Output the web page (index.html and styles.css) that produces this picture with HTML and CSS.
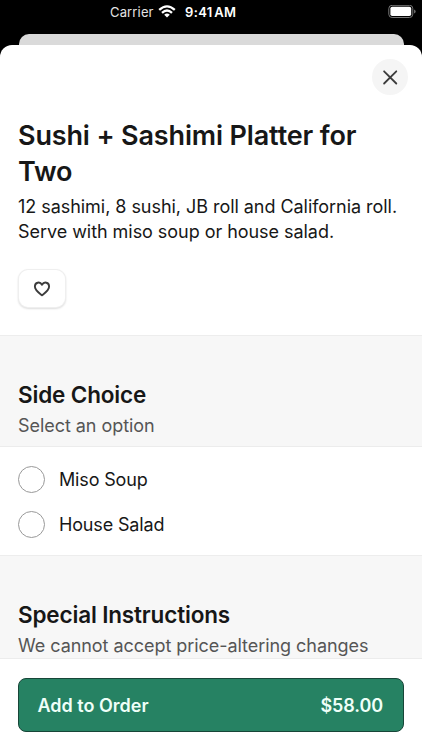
FILE: index.html
```html
<!DOCTYPE html>
<html lang="en">
<head>
<meta charset="utf-8">
<title>Sushi + Sashimi Platter for Two</title>
<link rel="stylesheet" href="styles.css">
</head>
<body>
<div class="screen">
  <header class="status">
    <span class="carrier">Carrier</span>
    <svg class="wifi" width="18" height="13" viewBox="0 0 18 13" fill="none" stroke="#fff" stroke-width="2.3">
      <path d="M1.2 4.9Q9-2.2 16.8 4.9M4 7.8Q9 3.1 14 7.8"/>
      <path d="M6.2 9.8Q9 7.4 11.8 9.8L9 12.6Z" fill="#fff" stroke="none"/>
    </svg>
    <span class="time">9:41 AM</span>
    <svg class="battery" width="28" height="14" viewBox="0 0 28 14">
      <rect x=".8" y=".3" width="24" height="12.2" rx="3.3" fill="none" stroke="#777" stroke-width="1"/>
      <rect x="2.4" y="1.8" width="20.8" height="9.2" rx="1.8" fill="#fff"/>
      <path d="M26.1 4.4q1.5.5 1.5 2t-1.5 2z" fill="#777"/>
    </svg>
  </header>
  <div class="back-card"></div>
  <main class="sheet">
    <section class="intro">
      <button class="close" aria-label="Close">
        <svg width="16" height="16" viewBox="0 0 16 16" fill="none" stroke="#3c3c3c" stroke-width="1.8" stroke-linecap="round"><path d="M2.1 2.3l12.2 12.2M14.3 2.3L2.1 14.5"/></svg>
      </button>
      <h1>Sushi + Sashimi Platter for Two</h1>
      <p class="description">12 sashimi, 8 sushi, JB roll and California roll. Serve with miso soup or house salad.</p>
      <button class="favorite" aria-label="Favorite">
        <svg width="18" height="16" viewBox="0 0 18 16" fill="none" stroke="#3c3c3c" stroke-width="1.9" stroke-linejoin="round"><path d="M9 14.3C7.7 13.1 1.9 9.7 1.9 5.5C1.9 1.3 6.9.2 9 3.7C11.1.2 16.1 1.3 16.1 5.5C16.1 9.7 10.3 13.1 9 14.3Z"/></svg>
      </button>
    </section>
    <section class="group">
      <h2>Side Choice</h2>
      <p>Select an option</p>
    </section>
    <section class="options">
      <label><span class="radio"></span>Miso Soup</label>
      <label><span class="radio"></span>House Salad</label>
    </section>
    <section class="group special">
      <h2>Special Instructions</h2>
      <p>We cannot accept price-altering changes</p>
    </section>
  </main>
  <footer>
    <button class="order"><span class="order-label">Add to Order</span><span class="price">$58.00</span></button>
  </footer>
</div>
</body>
</html>
```
FILE: styles.css
```css
* { box-sizing: border-box; }
body { margin: 0; background: #000; font-family: Inter, sans-serif; color: #171717; }
h1, h2, p { margin: 0; }
button { font: inherit; padding: 0; border: 0; }
svg { display: block; flex: none; }
.screen { width: 422px; height: 750px; display: flex; flex-direction: column; overflow: hidden; background: #000; }
.status { height: 34px; flex: none; display: flex; align-items: flex-start; padding: 5px 6px 0 110px; color: #fff; font-size: 13px; line-height: 15px; white-space: nowrap; }
.carrier { width: 44px; letter-spacing: .15px; color: #e4e4e4; }
.wifi { margin: 0 0 0 4px; }
.time { margin-left: 9px; font-weight: 600; letter-spacing: .35px; word-spacing: -2px; }
.battery { margin-left: auto; }
.back-card { height: 11px; flex: none; margin: 0 18px 0 18.5px; background: #dadada; border-radius: 10px 10px 0 0; }
.sheet { height: 614px; flex: none; background: #fff; border-radius: 12px 12px 0 0; overflow: hidden; }
.intro { height: 290px; padding: 13.5px 14px 0 18px; display: flex; flex-direction: column; align-items: flex-start; }
.close { width: 36px; height: 36px; flex: none; align-self: flex-end; border-radius: 50%; background: #f5f5f5; display: flex; align-items: center; justify-content: center; }
h1 { margin-top: 23.5px; font-size: 27px; line-height: 36px; font-weight: 600; letter-spacing: -.15px; width: 370px; }
.description { font-size: 18px; line-height: 24.75px; letter-spacing: -.045px; width: 390px; margin-top: 5px; }
.favorite { width: 46.5px; height: 37px; flex: none; margin: 25.5px 0 0 .5px; border-radius: 9px; background: #fff; box-shadow: 0 0 0 1px #efefef, 0 1px 2px 1px #dedede; display: flex; align-items: center; justify-content: center; }
.group { height: 112px; padding: 44px 18px 0; background: #f7f7f7; border-top: 1px solid #ededed; border-bottom: 1px solid #ececec; }
.group h2 { font-size: 22.5px; line-height: 29px; font-weight: 600; letter-spacing: -.16px; }
.group p { font-size: 18px; line-height: 25px; margin-top: 4px; color: #555; white-space: nowrap; letter-spacing: -.05px; }
.options { height: 108px; padding: 10px 18px 8px; display: flex; flex-direction: column; }
.options label { height: 45px; flex: none; display: flex; align-items: center; gap: 14px; font-size: 18px; letter-spacing: -.15px; }
.radio { width: 27px; height: 27px; border: 1px solid #999; border-radius: 50%; }
.special { height: 104px; }
footer { flex: 1; background: #fff; padding: 19px 18px 18px; }
.order { width: 386px; height: 54px; padding: 0 20px 0 18.5px; display: flex; align-items: center; justify-content: space-between; background: #268263; color: #effff8; border: 1px solid #174638; border-radius: 8px; font-size: 18px; font-weight: 600; }
.price { letter-spacing: -.1px; }
```
